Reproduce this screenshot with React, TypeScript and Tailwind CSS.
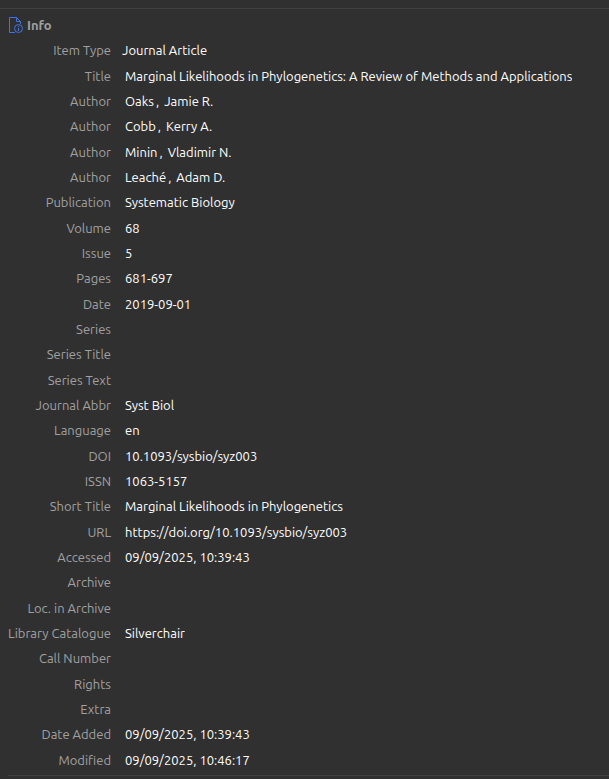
import { clsx } from "clsx";

type Field = {
  label: string;
  value?: string;
  // creators are stored as last / first name
  creator?: [string, string];
  menu?: boolean;
};

const FIELDS: Field[] = [
  { label: "Item Type", value: "Journal Article", menu: true },
  { label: "Title", value: "Marginal Likelihoods in Phylogenetics: A Review of Methods and Applications" },
  { label: "Author", creator: ["Oaks", "Jamie R."] },
  { label: "Author", creator: ["Cobb", "Kerry A."] },
  { label: "Author", creator: ["Minin", "Vladimir N."] },
  { label: "Author", creator: ["Leaché", "Adam D."] },
  { label: "Publication", value: "Systematic Biology" },
  { label: "Volume", value: "68" },
  { label: "Issue", value: "5" },
  { label: "Pages", value: "681-697" },
  { label: "Date", value: "2019-09-01" },
  { label: "Series" },
  { label: "Series Title" },
  { label: "Series Text" },
  { label: "Journal Abbr", value: "Syst Biol" },
  { label: "Language", value: "en" },
  { label: "DOI", value: "10.1093/sysbio/syz003" },
  { label: "ISSN", value: "1063-5157" },
  { label: "Short Title", value: "Marginal Likelihoods in Phylogenetics" },
  { label: "URL", value: "https://doi.org/10.1093/sysbio/syz003" },
  { label: "Accessed", value: "09/09/2025, 10:39:43" },
  { label: "Archive" },
  { label: "Loc. in Archive" },
  { label: "Library Catalogue", value: "Silverchair" },
  { label: "Call Number" },
  { label: "Rights" },
  { label: "Extra" },
  { label: "Date Added", value: "09/09/2025, 10:39:43" },
  { label: "Modified", value: "09/09/2025, 10:46:17" },
];

function InfoIcon() {
  return (
    <svg viewBox="0 0 16 16" className="h-4 w-4 shrink-0" fill="none" stroke="#4072e5" aria-hidden="true">
      <path d="M7 15.5H1.5V.5H8.5L12.5 4.5V7" />
      <path d="M8.5 .5V4.5H12.5" />
      <circle cx="10.5" cy="11.5" r="4" />
      <path d="M10.5 11V14M10.5 9V10" strokeWidth="1.2" />
    </svg>
  );
}

function FieldRow({ label, value, creator, menu }: Field) {
  return (
    <div className="flex gap-3.5 leading-5">
      <dt className="w-[111px] shrink-0 whitespace-nowrap text-right text-[#a0a0a0]">{label}</dt>
      <dd className={clsx("min-w-0 truncate text-white", menu && "-ml-[3px]")}>
        {creator ? (
          <span className="flex">
            <span>{creator[0]}</span>
            <span className="pl-0.5 pr-[5px]">,</span>
            <span>{creator[1]}</span>
          </span>
        ) : (
          value
        )}
      </dd>
    </div>
  );
}

export default function App() {
  return (
    <main className="min-h-screen bg-[#303030] pt-2 font-[Ubuntu,'Open_Sans',sans-serif] text-[13px]">
      <section className="border-t border-[#404040] pt-2">
        <h2 className="flex items-center gap-[3px] pl-2 font-bold leading-4 text-[#a0a0a0]">
          <InfoIcon />
          Info
        </h2>
        <dl className="grid auto-rows-[26px_25px_25px] pt-[7px] pr-2">
          {FIELDS.map((field, i) => (
            <FieldRow key={i} {...field} />
          ))}
        </dl>
      </section>
      <hr className="ml-2 border-[#404040]" />
    </main>
  );
}
